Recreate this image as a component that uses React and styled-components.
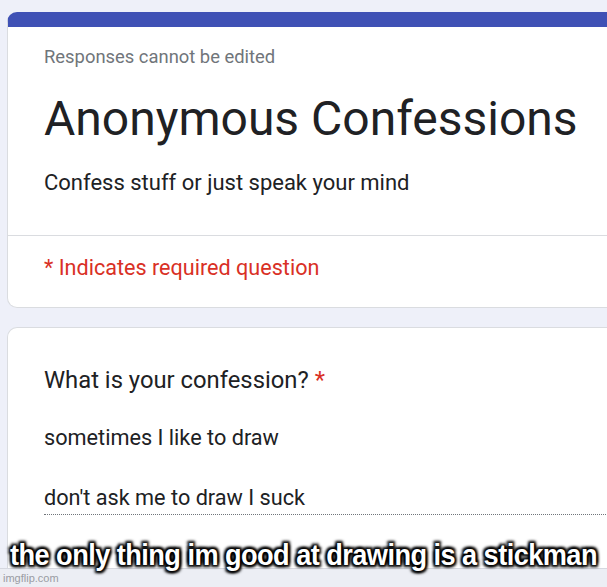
import React from 'react';
import styled, { createGlobalStyle } from 'styled-components';

const Global = createGlobalStyle`
  html, body {
    margin: 0;
    padding: 0;
    background: #eef0f9;
    overflow: hidden;
  }
  * { box-sizing: border-box; }
`;

const Frame = styled.div`
  position: relative;
  width: 607px;
  height: 587px;
  overflow: hidden;
  display: flex;
  flex-direction: column;
  font-family: Roboto, "Liberation Sans", sans-serif;
`;

const Page = styled.div`
  flex: 1;
  overflow: hidden;
  background: #eef0f9;
  padding: 12px 0 0 7px;
  display: flex;
  flex-direction: column;
  gap: 19px;
`;

const Card = styled.div`
  background: #fff;
  border: 1px solid #dadce0;
  border-top: ${p => (p.accent ? '15px solid #3f51b5' : '1px solid #dadce0')};
  border-radius: 10px;
  margin-right: -30px;
  flex-shrink: 0;
  ${p => p.open && 'border-bottom: none; border-bottom-left-radius: 0; border-bottom-right-radius: 0; flex: 1;'}
`;

const Section = styled.div`
  padding: ${p => p.pad || '0 36px'};
  border-top: ${p => (p.divided ? '1px solid #dadce0' : 'none')};
`;

const Note = styled.div`
  font-size: 18.4px;
  line-height: 22px;
  color: #70757a;
`;

const Title = styled.h1`
  margin: 23px 0 0;
  font-size: 48px;
  line-height: 56px;
  font-weight: 400;
  color: #202124;
`;

const Description = styled.div`
  margin-top: 23px;
  font-size: 22px;
  line-height: 26px;
  color: #202124;
`;

const Required = styled.div`
  font-size: 21.6px;
  line-height: 26px;
  color: #d93025;
`;

const Question = styled.div`
  font-size: 23.8px;
  line-height: 28px;
  color: #202124;
  span {
    color: #d93025;
    margin-left: 6px;
  }
`;

const Answer = styled.div`
  margin-top: ${p => p.gap || '0'};
  font-size: 21.7px;
  line-height: 26px;
  color: #202124;
  padding-bottom: ${p => (p.underline ? '3px' : '0')};
  border-bottom: ${p => (p.underline ? '1px dotted #70757a' : 'none')};
`;

const Footer = styled.div`
  height: 19px;
  background: #eceef4;
  border-top: 1px solid #d6d8e0;
  padding-left: 3px;
  font-family: "Liberation Sans", Arial, sans-serif;
  font-size: 11px;
  line-height: 19px;
  color: #9a9ca3;
`;

const Caption = styled.div`
  position: absolute;
  left: -30px;
  right: -30px;
  top: 539px;
  text-align: center;
  font-family: "Liberation Sans", Arial, sans-serif;
  font-weight: 700;
  font-size: 30px;
  letter-spacing: -0.6px;
  line-height: 32px;
  color: #fff;
  transform: scaleX(0.905);
  text-shadow:
    0 0 2px #000, 0 0 3px #000, 0 0 4px #000,
    2px 2px 3px #000, -2px -2px 3px #000,
    2px -2px 3px #000, -2px 2px 3px #000;
`;

export default function App() {
  return (
    <Frame>
      <Global />
      <Page>
        <Card accent>
          <Section pad="19px 36px 39px">
            <Note>Responses cannot be edited</Note>
            <Title>Anonymous Confessions</Title>
            <Description>Confess stuff or just speak your mind</Description>
          </Section>
          <Section divided pad="19px 36px 26px">
            <Required>* Indicates required question</Required>
          </Section>
        </Card>
        <Card open>
          <Section pad="38px 0 0 36px">
            <Question>What is your confession?<span>*</span></Question>
            <Answer gap="31px">sometimes I like to draw</Answer>
            <Answer gap="34px" underline>don't ask me to draw I suck</Answer>
          </Section>
        </Card>
      </Page>
      <Footer>imgflip.com</Footer>
      <Caption>the only thing im good at drawing is a stickman</Caption>
    </Frame>
  );
}
